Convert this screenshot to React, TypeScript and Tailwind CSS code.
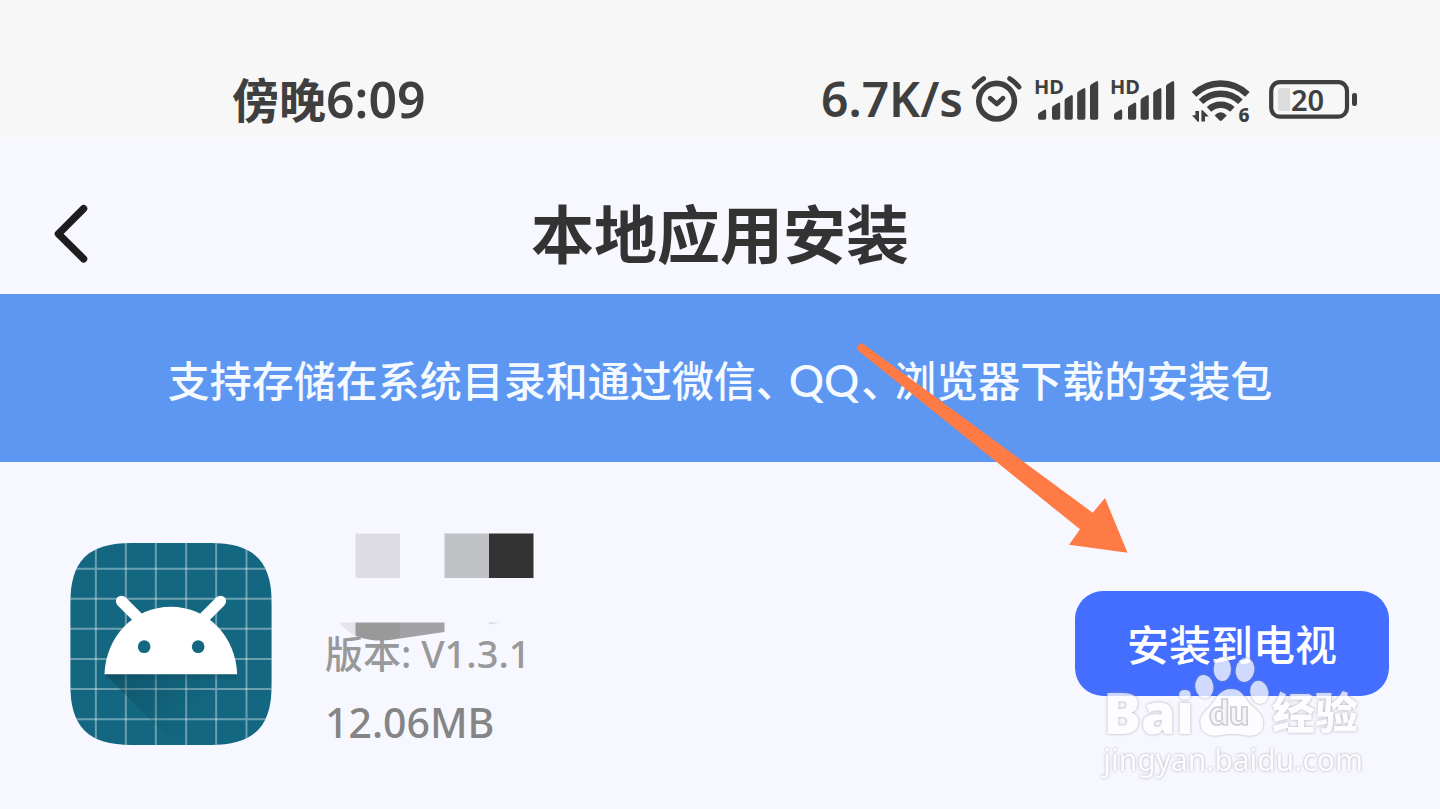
import React from "react";

const INK = "#3f3f3f";

function AlarmIcon() {
  return (
    <svg width="52" height="48" viewBox="972 75 52 48" fill="none" stroke={INK} strokeLinecap="round" strokeLinejoin="round" aria-hidden="true">
      <circle cx="997.6" cy="101.2" r="17.8" strokeWidth="5.6" />
      <path d="M975.2 87C978 83.6 981 80.8 984.6 78.6M1020 87C1017.3 83.6 1014.4 80.8 1010.6 78.6" strokeWidth="4.8" />
      <path d="M991.2 98.2L997.8 104L1004 98.2" strokeWidth="4.8" />
    </svg>
  );
}

function SignalIcon() {
  const bars = [
    { x: 1039, top: 109.5 },
    { x: 1053, top: 102.5 },
    { x: 1065.6, top: 95 },
    { x: 1078.2, top: 88 },
    { x: 1091, top: 81 },
  ];
  return (
    <svg className="overflow-visible" width="64" height="48" viewBox="1036 75 64 48" fill={INK} aria-hidden="true">
      <text x="1035" y="94" fontSize="20" fontWeight="700" className="font-['Noto_Sans',sans-serif]">
        HD
      </text>
      {bars.map((b) => (
        <path
          key={b.x}
          d={`M${b.x} ${b.top + 5.5}Q${b.x} ${b.top + 4} ${b.x + 1.4} ${b.top + 3.2}L${b.x + 6} ${b.top + 0.4}Q${b.x + 8.2} ${b.top - 0.6} ${b.x + 8.2} ${b.top + 1.8}V118Q${b.x + 8.2} 119.8 ${b.x + 6.4} 119.8H${b.x + 1.8}Q${b.x} 119.8 ${b.x} 118Z`}
        />
      ))}
    </svg>
  );
}

function WifiIcon() {
  return (
    <svg className="overflow-visible" width="60" height="48" viewBox="1191 75 60 48" fill="none" stroke={INK} strokeWidth="6.4" aria-hidden="true">
      <path d="M1194 94.4A38 38 0 0 1 1247.4 94.4" />
      <path d="M1201 101.8A28 28 0 0 1 1240.4 101.8" />
      <path d="M1209 109.4A17 17 0 0 1 1232.4 109.4" />
      <path d="M1214.6 115.4Q1220.7 109 1226.8 115.4L1221.8 120.6Q1220.7 121.5 1219.6 120.6Z" fill={INK} stroke="none" />
      <path d="M1192 115.2H1195.4V111H1199V121.6L1198 122ZM1208.8 116.4H1205V121.6H1201.4V110.6L1202.4 110Z" fill={INK} stroke="none" />
      <text x="1238.5" y="122" fontSize="19" fontWeight="800" fill={INK} stroke="none" className="font-['Noto_Sans',sans-serif]">
        6
      </text>
    </svg>
  );
}

function BatteryIcon() {
  return (
    <svg width="88" height="48" viewBox="1269 75 88 48" fill="none" aria-hidden="true">
      <rect x="1271.2" y="82.2" width="75.8" height="34.4" rx="8.5" stroke={INK} strokeWidth="4.2" />
      <path d="M1290 88V111H1281Q1278 111 1278 108V91Q1278 88 1281 88Z" fill="#dcdcdc" />
      <rect x="1352" y="93" width="5" height="13" rx="2.2" fill={INK} />
      <text x="1291" y="110.5" fontSize="29" fontWeight="600" fill={INK} className="font-['Noto_Sans',sans-serif]">
        20
      </text>
    </svg>
  );
}

function AppIcon() {
  const lines = [109, 199, 289, 380, 470, 561];
  return (
    <svg className="mt-2.5 shrink-0" width="202" height="202" viewBox="32 37 605 606" role="img" aria-label="应用图标">
      <defs>
        <clipPath id="tile">
          <path d="M32 222C32 90 85 37 217 37H452C584 37 637 90 637 222V458C637 590 584 643 452 643H217C85 643 32 590 32 458Z" />
        </clipPath>
        <linearGradient id="shade" gradientUnits="userSpaceOnUse" x1="160" y1="430" x2="400" y2="580">
          <stop offset="0" stopColor="#0a3f50" stopOpacity="0.4" />
          <stop offset="1" stopColor="#0a3f50" stopOpacity="0" />
        </linearGradient>
        <linearGradient id="under" x1="0" y1="0" x2="0" y2="1">
          <stop offset="0" stopColor="#0a3f50" stopOpacity="0.35" />
          <stop offset="1" stopColor="#0a3f50" stopOpacity="0" />
        </linearGradient>
      </defs>
      <g clipPath="url(#tile)">
        <rect x="32" y="37" width="605" height="606" fill="#136781" />
        <g stroke="#ffffff" strokeOpacity="0.38" strokeWidth="6">
          {lines.map((v) => (
            <path key={v} d={`M${v} 37V643M32 ${v + 5}H637`} />
          ))}
        </g>
        <path d="M135 430H533L637 534V643H348Z" fill="url(#shade)" />
        <rect x="138" y="430" width="393" height="22" fill="url(#under)" />
        <path d="M186 212L246 272M483 212L423 272" stroke="#fff" strokeWidth="34" strokeLinecap="round" />
        <path d="M135 431C138 320 222 228 334 228C446 228 530 320 533 431Z" fill="#fff" />
        <circle cx="254" cy="348" r="19" fill="#136781" />
        <circle cx="416" cy="348" r="19" fill="#136781" />
      </g>
    </svg>
  );
}

function NameMosaic() {
  return (
    <svg className="overflow-visible" width="210" height="104" viewBox="325 533 210 104" aria-hidden="true">
      <rect x="355.5" y="533.5" width="44.5" height="44.5" fill="#dddce2" />
      <rect x="444.5" y="533.5" width="44.5" height="44.5" fill="#c0c1c5" />
      <rect x="489" y="533.5" width="44.5" height="44.5" fill="#333333" />
      <path d="M339 622.5H356V636.5Q346 631 339 622.5Z" fill="#e4e4ea" />
      <path d="M355.5 622.5H400V638.5Q384 641.5 372 640Q362 638.5 355.5 635.5Z" fill="#999999" />
      <path d="M400 622.5H444.5V632L400 638.5Z" fill="#a2a2a6" />
      <path d="M489 622.5H502Q496 623 489 624.5Z" fill="#d8d8dd" />
    </svg>
  );
}

function Arrow() {
  return (
    <svg className="pointer-events-none absolute top-12 right-[312px] z-10" width="272" height="212" viewBox="856 342 272 212" aria-hidden="true">
      <path d="M858 350.5Q856 348.5 857.5 346.5L859.8 343.8Q861.2 342.6 863 343.8L1092.7 512.7L1105 498L1127.5 552.8L1069 544.7L1080 529.3Z" fill="#ff7b45" />
    </svg>
  );
}

function Paw() {
  return (
    <svg width="76" height="83" viewBox="430 255 228 249" aria-hidden="true" className="[filter:drop-shadow(0_0_1px_#8a8a95)]">
      <g fill="#fff">
        <ellipse cx="461" cy="350" rx="27" ry="35" transform="rotate(-8 461 350)" />
        <ellipse cx="515" cy="297" rx="26" ry="36" />
        <ellipse cx="583" cy="300" rx="28" ry="36" transform="rotate(10 583 300)" />
        <ellipse cx="626" cy="367" rx="27" ry="35" transform="rotate(-12 626 367)" />
        <path d="M543 357C575 357 582 386 602 406C622 424 638 436 638 460C638 486 618 500 592 497C570 495 560 492 543 492C526 492 514 497 494 497C466 498 449 482 449 456C449 432 468 422 482 404C499 382 509 357 543 357Z" />
      </g>
      <text x="476" y="466" fontSize="104" fontWeight="800" fill="#f4f4f8" stroke="#c0c0c8" strokeWidth="5" className="font-[Lato,sans-serif]">
        du
      </text>
    </svg>
  );
}

function Watermark() {
  return (
    <div className="pointer-events-none absolute top-[193px] right-[77px] z-10 text-white opacity-75">
      <div className="flex items-end">
        <span className="text-[56px] leading-[52px] font-extrabold font-['Open_Sans',sans-serif] [text-shadow:0_0_3px_#8a8a95]">Bai</span>
        <Paw />
        <span className="ml-0.5 text-[43px] leading-[56px] font-black font-['Noto_Sans_CJK_SC',sans-serif] [text-shadow:0_0_3px_#8a8a95]">经验</span>
      </div>
      <div className="pt-1 text-[30px] leading-9 font-['Noto_Sans',sans-serif] [text-shadow:0_0_3px_#8a8a95]">jingyan.baidu.com</div>
    </div>
  );
}

export default function App() {
  return (
    <div className="min-h-screen bg-[#f7f8ff] font-['Noto_Sans','Noto_Sans_CJK_SC',sans-serif]">
      <div className="flex h-[138px] items-center justify-between bg-[#f7f7f7] pt-[68px] pr-[83px] pb-[8px] pl-[232px] text-[#3f3f3f]">
        <span className="text-[47px] leading-[48px] font-semibold whitespace-nowrap">
          傍晚<span className="text-[50px]">6:09</span>
        </span>
        <div className="flex items-center">
          <span className="mr-2 text-[48px] leading-[48px] font-semibold">6.7K/s</span>
          <AlarmIcon />
          <div className="ml-3 flex gap-3">
            <SignalIcon />
            <SignalIcon />
          </div>
          <div className="ml-4 flex gap-[18px]">
            <WifiIcon />
            <BatteryIcon />
          </div>
        </div>
      </div>

      <header className="grid h-[156px] grid-cols-[1fr_auto_1fr] items-center px-[52px] pt-9">
        <button type="button" aria-label="返回" className="justify-self-start">
          <svg width="38" height="60" viewBox="52 204 38 60" fill="none" stroke="#1d1d1f" strokeWidth="7.4" strokeLinecap="round" strokeLinejoin="round">
            <path d="M83.6 208.6L58.4 233.8L83.6 258.8" />
          </svg>
        </button>
        <h1 className="text-[63px] leading-[80px] font-bold whitespace-nowrap text-[#333333]">本地应用安装</h1>
      </header>

      <main className="relative">
        <p className="flex h-[168px] items-center justify-center bg-[#5e97f2] pt-1 text-[42px] leading-[60px] font-medium whitespace-nowrap text-[#f4faff]">
          <span>
            支持存储在系统目录和通过微信
            <span className="mr-3 [font-feature-settings:'halt']">、</span>
            <span className="text-[44px] font-[Lato,sans-serif]">QQ</span>
            <span className="mr-3 ml-0.5 [font-feature-settings:'halt']">、</span>
            浏览器下载的安装包
          </span>
        </p>
        <Arrow />

        <section className="relative flex items-start pt-[71px] pr-[51px] pl-[70px]">
          <AppIcon />
          <div className="ml-[53px] flex flex-col text-[#999999]">
            <NameMosaic />
            <span className="text-[38px] leading-8 font-medium whitespace-nowrap">版本: V1.3.1</span>
            <span className="mt-7 text-[41px] leading-[50px] font-medium text-[#858585]">12.06MB</span>
          </div>
          <button type="button" className="mt-[58px] ml-auto rounded-[28px] bg-[#446eff] px-[52px] pt-6 pb-[21px] text-[42px] leading-[60px] font-medium whitespace-nowrap text-white">
            安装到电视
          </button>
          <Watermark />
        </section>
      </main>
    </div>
  );
}
